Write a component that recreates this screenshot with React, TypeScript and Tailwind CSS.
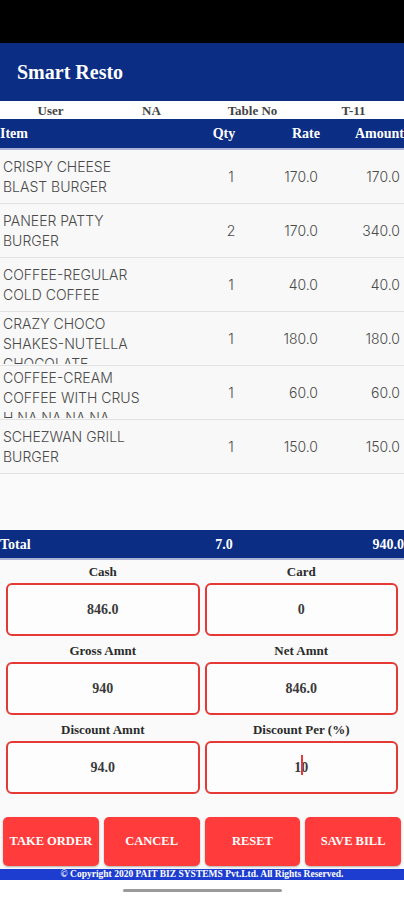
import React from "react";

const serif = { fontFamily: '"Liberation Serif", "Times New Roman", serif' };
const sans = { fontFamily: 'Inter, Roboto, "Liberation Sans", Arial, sans-serif' };

const items = [
  { lines: ["CRISPY CHEESE", "BLAST BURGER"], qty: "1", rate: "170.0", amt: "170.0" },
  { lines: ["PANEER PATTY", "BURGER"], qty: "2", rate: "170.0", amt: "340.0" },
  { lines: ["COFFEE-REGULAR", "COLD COFFEE"], qty: "1", rate: "40.0", amt: "40.0" },
  { lines: ["CRAZY CHOCO", "SHAKES-NUTELLA", "CHOCOLATE"], qty: "1", rate: "180.0", amt: "180.0" },
  { lines: ["COFFEE-CREAM", "COFFEE WITH CRUS", "H NA NA NA NA"], qty: "1", rate: "60.0", amt: "60.0" },
  { lines: ["SCHEZWAN GRILL", "BURGER"], qty: "1", rate: "150.0", amt: "150.0" },
];

function Field({ label, value, caret }: { label: string; value: string; caret?: boolean }) {
  return (
    <div className="flex flex-col">
      <div className="h-[23px] flex items-center justify-center text-[13px] font-bold text-[#2b2b2b]" style={serif}>
        {label}
      </div>
      <div className="h-[53px] border-2 border-[#e53935] rounded-[6px] bg-[#fdfdfd] flex items-center justify-center text-[14px] font-bold text-[#3a3a3a]" style={serif}>
        {caret ? (
          <span className="relative">
            {value}
            <span className="absolute left-[7px] top-[-2px] w-[2px] h-[20px] bg-[#e53935]" />
          </span>
        ) : (
          value
        )}
      </div>
    </div>
  );
}

export default function App() {
  return (
    <div className="w-[404px] h-[900px] bg-[#fafafa] flex flex-col overflow-hidden">
      <div className="h-[43px] bg-black shrink-0" />
      <div className="h-[58px] bg-[#0b2d83] flex items-center pl-[17px] shrink-0">
        <span className="text-white text-[20px] font-bold" style={serif}>Smart Resto</span>
      </div>
      <div className="h-[18px] bg-white grid grid-cols-4 items-center text-[13px] font-bold text-[#444]" style={serif}>
        <div className="text-center">User</div>
        <div className="text-center">NA</div>
        <div className="text-center">Table No</div>
        <div className="text-center">T-11</div>
      </div>
      <div className="h-[31px] bg-[#0b2d83] border-b-2 border-[#aab3d6] grid grid-cols-[200px_62px_56px_86px] items-center text-white text-[14px] font-bold shrink-0" style={serif}>
        <div>Item</div>
        <div className="text-center pr-[14px]">Qty</div>
        <div className="text-right mr-[-2px]">Rate</div>
        <div className="text-right">Amount</div>
      </div>
      <div className="h-[380px] shrink-0" style={sans}>
        {items.map((it, i) => (
          <div key={i} className="h-[54px] border-b border-[#e2e2e2] bg-[#f8f8f8] grid grid-cols-[200px_62px_56px_86px] items-center text-[14px] font-light text-[#4a4a4a]">
            <div className="pl-[3px] max-h-[50px] overflow-hidden leading-[20px]">
              {it.lines.map((l, j) => (
                <div key={j} className="whitespace-nowrap">{l}</div>
              ))}
            </div>
            <div className="text-center">{it.qty}</div>
            <div className="text-right">{it.rate}</div>
            <div className="text-right pr-[4px]">{it.amt}</div>
          </div>
        ))}
      </div>
      <div className="h-[30px] bg-[#0b2d83] border-b-2 border-[#aab3d6] grid grid-cols-[200px_62px_56px_86px] items-center text-white text-[14px] font-bold shrink-0" style={serif}>
        <div>Total</div>
        <div className="text-center pr-[14px]">7.0</div>
        <div />
        <div className="text-right">940.0</div>
      </div>
      <div className="px-[6px] grid grid-cols-2 gap-x-[5px] gap-y-[3px]">
        <Field label="Cash" value="846.0" />
        <Field label="Card" value="0" />
        <Field label="Gross Amnt" value="940" />
        <Field label="Net Amnt" value="846.0" />
        <Field label="Discount Amnt" value="94.0" />
        <Field label="Discount Per (%)" value="10" caret />
      </div>
      <div className="mt-[23px] px-[3px] grid grid-cols-4 gap-[5px]">
        {["TAKE ORDER", "CANCEL", "RESET", "SAVE BILL"].map((b) => (
          <div key={b} className="h-[49px] bg-[#ff3b3b] rounded-[5px] shadow-[0_1px_2px_rgba(0,0,0,0.3)] flex items-center justify-center text-white text-[12.5px] font-bold whitespace-nowrap" style={serif}>
            {b}
          </div>
        ))}
      </div>
      <div className="mt-[3px] h-[11px] bg-[#1c3dcf] flex items-center justify-center text-white text-[9.5px] font-bold whitespace-nowrap" style={serif}>
        © Copyright 2020 PAIT BIZ SYSTEMS Pvt.Ltd. All Rights Reserved.
      </div>
      <div className="flex-1 bg-white flex justify-center pt-[9px]">
        <div className="w-[159px] h-[3px] rounded-full bg-[#9a9a9a]" />
      </div>
    </div>
  );
}
